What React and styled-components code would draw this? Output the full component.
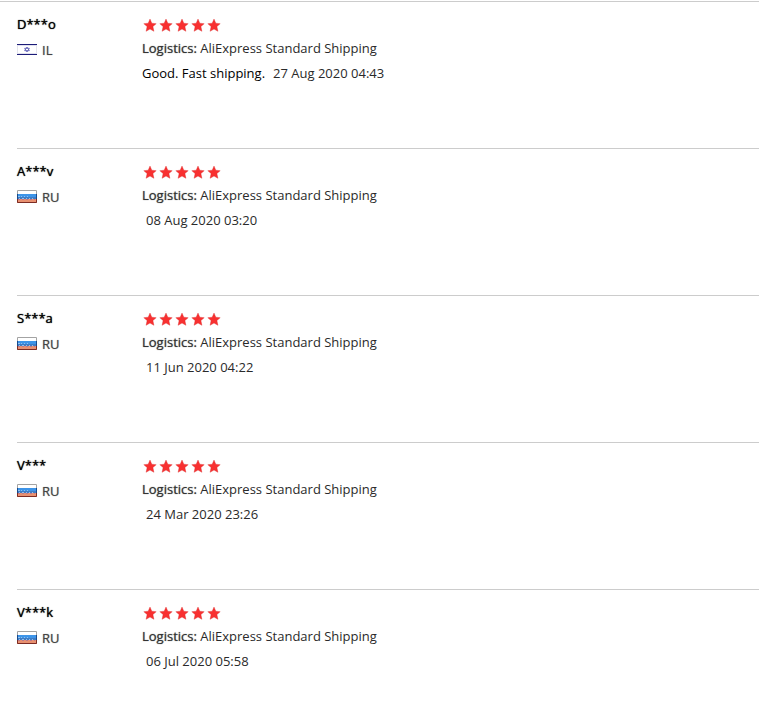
import React from 'react';
import styled, { createGlobalStyle } from 'styled-components';

const reviews = [
  { id: 1, name: 'D***o', country: 'IL', text: 'Good. Fast shipping.', date: '27 Aug 2020 04:43' },
  { id: 2, name: 'A***v', country: 'RU', text: '', date: '08 Aug 2020 03:20' },
  { id: 3, name: 'S***a', country: 'RU', text: '', date: '11 Jun 2020 04:22' },
  { id: 4, name: 'V***', country: 'RU', text: '', date: '24 Mar 2020 23:26' },
  { id: 5, name: 'V***k', country: 'RU', text: '', date: '06 Jul 2020 05:58' },
];

const FlagRU = () => (
  <svg width="20" height="14" viewBox="0 0 20 14" role="img" aria-label="Russia">
    <rect width="20" height="13" fill="#fff" />
    <rect y="4" width="20" height="5" fill="#3d94e8" />
    <rect y="7" width="20" height="2" fill="#3f7cc4" />
    <path d="M1 6.5h2m1 0h1m2 0h1m2 0h1M2 8.5h1m2 0h2m2 0h1m2 0h1m2 0h1" stroke="#8fc0ee" />
    <rect y="9" width="20" height="4" fill="#e89070" />
    <path d="M1 9.5h2m2 0h2m2 0h2m2 0h2m2 0h1" stroke="#b9788a" />
    <path d="M0.5 4V0.5h19V4" fill="none" stroke="#a3a3a3" />
    <path d="M0.5 4v5M19.5 4v5" stroke="#174a8c" />
    <path d="M0.5 9v3.5h19V9" fill="none" stroke="#7c2c24" />
  </svg>
);

const FlagIL = () => (
  <svg width="20" height="14" viewBox="0 0 20 14" role="img" aria-label="Israel">
    <rect width="20" height="13" fill="#fff" />
    <path d="M0.5 2v9M19.5 2v9" stroke="#e4e4ec" />
    <path d="M0 1.5h20M0 11.5h20" stroke="#1c1c78" />
    <path d="M0 2.5h20M0 10.5h20" stroke="#e2e2f0" />
    <path d="M10 4l2.4 3.7H7.6zM10 9L7.6 5.3h4.8z" fill="none" stroke="#5a5ab4" strokeWidth="0.8" />
  </svg>
);

const Stars = () => (
  <StarRow role="img" aria-label="5 out of 5 stars">
    {[1, 2, 3, 4, 5].map((n) => (
      <svg key={n} width="16" height="14" viewBox="0 0 16 14" aria-hidden="true">
        <path
          d="M8 1.1l1.8 4.1 4.4 0.5-3.3 2.9 1 4.7L8 11l-3.9 2.3 1-4.7-3.3-2.9 4.4-0.5z"
          fill="#f83030"
          stroke="#dc3030"
          strokeWidth="0.4"
        />
      </svg>
    ))}
  </StarRow>
);

const App = () => (
  <>
    <GlobalStyle />
    <ReviewList>
      {reviews.map((review) => (
        <Review key={review.id}>
          <User>
            <UserName>{review.name}</UserName>
            <Country>
              {review.country === 'IL' ? <FlagIL /> : <FlagRU />}
              {review.country}
            </Country>
          </User>
          <Feedback>
            <Stars />
            <Logistics>
              <strong>Logistics:</strong> AliExpress Standard Shipping
            </Logistics>
            <Comment>
              {review.text && <CommentText>{review.text}</CommentText>}
              <ReviewDate>{review.date}</ReviewDate>
            </Comment>
          </Feedback>
        </Review>
      ))}
    </ReviewList>
  </>
);

const GlobalStyle = createGlobalStyle`
  body {
    margin: 0;
    background: #fff;
    font-family: 'Open Sans', sans-serif;
    font-size: 13px;
    color: #2a2a2a;
  }
`;

const ReviewList = styled.main`
  margin-top: 1px;
  border-top: 1px solid #ccc;
  padding-left: 17px;
`;

const Review = styled.article`
  display: flex;
  padding: 9px 0 62px;

  & + & {
    border-top: 1px solid #ccc;
  }

  &:last-child {
    padding-bottom: 24px;
  }
`;

const User = styled.div`
  flex: 0 0 125px;
`;

const UserName = styled.div`
  line-height: 26px;
  font-weight: 500;
  color: #000;
  text-shadow: 0 0 1px #000;
`;

const Country = styled.div`
  display: flex;
  align-items: center;
  gap: 5px;
  line-height: 26px;
  font-weight: 500;
  color: #444;
  text-shadow: 0 0 1px #888;
`;

const Feedback = styled.div`
  flex: 1;
  min-width: 0;
`;

const StarRow = styled.div`
  display: flex;
  align-items: flex-end;
  box-sizing: border-box;
  height: 25px;
  padding-bottom: 4px;
`;

const Logistics = styled.div`
  line-height: 25px;

  strong {
    font-weight: 500;
    color: #333;
    text-shadow: 0 0 1px #666;
  }
`;

const Comment = styled.div`
  line-height: 25px;
`;

const CommentText = styled.span`
  margin-right: 4px;
  color: #000;
`;

const ReviewDate = styled.time`
  margin-left: 4px;
`;

export default App;
